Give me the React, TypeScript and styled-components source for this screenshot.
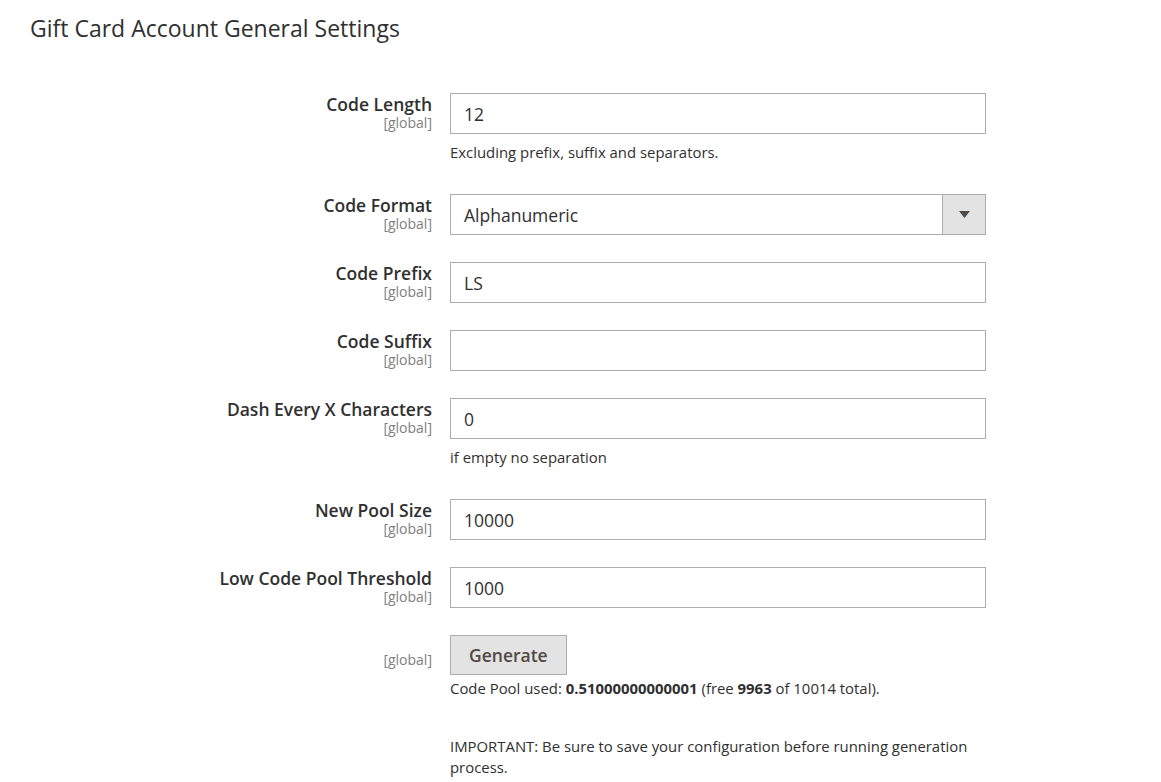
import React from "react";
import styled, { createGlobalStyle } from "styled-components";

const Global = createGlobalStyle`
  html, body { margin: 0; padding: 0; background: #ffffff; }
  body { font-family: "Open Sans", "Noto Sans", sans-serif; color: #303030; }
  * { box-sizing: border-box; }
`;

const Page = styled.div`
  width: 1161px;
  min-height: 782px;
  padding: 14px 0 0 0;
  background: #fff;
`;

const Title = styled.h2`
  margin: 0 0 0 30px;
  font-size: 23px;
  font-weight: 400;
  line-height: 28px;
  color: #303030;
`;

const Form = styled.div`
  display: flex;
  flex-direction: column;
  padding-top: 51px;
`;

const Row = styled.div`
  display: grid;
  grid-template-columns: 432px 536px;
  column-gap: 18px;
  margin-bottom: 27px;
`;

const LabelCell = styled.div<{ $offset?: number }>`
  display: flex;
  flex-direction: column;
  align-items: flex-end;
  text-align: right;
  padding-top: ${(p) => (p.$offset ?? 1)}px;
`;

const LabelText = styled.span`
  font-size: 17.5px;
  font-weight: 600;
  line-height: 20px;
  color: #303030;
`;

const Scope = styled.span`
  font-size: 14px;
  line-height: 18px;
  color: #808080;
`;

const FieldCell = styled.div`
  display: flex;
  flex-direction: column;
  align-items: flex-start;
`;

const TextInput = styled.div`
  width: 536px;
  height: 41px;
  border: 1px solid #adadad;
  background: #fff;
  padding: 0 13px;
  display: flex;
  align-items: center;
  font-size: 17.5px;
  color: #303030;
`;

const SelectBox = styled.div`
  width: 536px;
  height: 41px;
  border: 1px solid #adadad;
  background: #fff;
  display: flex;
  align-items: stretch;
`;

const SelectValue = styled.div`
  flex: 1;
  padding: 0 13px;
  display: flex;
  align-items: center;
  font-size: 17.5px;
  color: #303030;
`;

const SelectArrow = styled.div`
  width: 43px;
  background: #e3e3e3;
  border-left: 1px solid #adadad;
  display: flex;
  align-items: center;
  justify-content: center;
`;

const Note = styled.div<{ $mt?: number }>`
  margin: ${(p) => (p.$mt ?? 8)}px 0 5px;
  font-size: 14.9px;
  line-height: 20px;
  color: #303030;
  b { font-weight: 700; }
`;

const Button = styled.button`
  height: 40px;
  padding: 0 18px;
  border: 1px solid #adadad;
  background: #e3e3e3;
  color: #514943;
  font-family: "Open Sans", "Noto Sans", sans-serif;
  font-size: 17.5px;
  font-weight: 600;
  cursor: pointer;
`;

const Important = styled.div`
  margin-top: 33px;
  font-size: 14.9px;
  line-height: 21px;
  color: #303030;
  width: 536px;
`;

type FieldProps = { label: string; value: string; note?: string; select?: boolean };

const Field = ({ label, value, note, select }: FieldProps) => (
  <Row>
    <LabelCell>
      <LabelText>{label}</LabelText>
      <Scope>[global]</Scope>
    </LabelCell>
    <FieldCell>
      {select ? (
        <SelectBox>
          <SelectValue>{value}</SelectValue>
          <SelectArrow>
            <svg width="11" height="7" viewBox="0 0 11 7">
              <path d="M0 0 H11 L5.5 7 Z" fill="#514943" />
            </svg>
          </SelectArrow>
        </SelectBox>
      ) : (
        <TextInput>{value}</TextInput>
      )}
      {note && <Note>{note}</Note>}
    </FieldCell>
  </Row>
);

export default function App() {
  return (
    <Page>
      <Global />
      <Title>Gift Card Account General Settings</Title>
      <Form>
        <Field label="Code Length" value="12" note="Excluding prefix, suffix and separators." />
        <Field label="Code Format" value="Alphanumeric" select />
        <Field label="Code Prefix" value="LS" />
        <Field label="Code Suffix" value="" />
        <Field label="Dash Every X Characters" value="0" note="if empty no separation" />
        <Field label="New Pool Size" value="10000" />
        <Field label="Low Code Pool Threshold" value="1000" />
        <Row>
          <LabelCell $offset={16}>
            <Scope>[global]</Scope>
          </LabelCell>
          <FieldCell>
            <Button>Generate</Button>
            <Note $mt={3}>
              Code Pool used: <b>0.51000000000001</b> (free <b>9963</b> of 10014 total).
            </Note>
            <Important>
              IMPORTANT: Be sure to save your configuration before running generation process.
            </Important>
          </FieldCell>
        </Row>
      </Form>
    </Page>
  );
}
